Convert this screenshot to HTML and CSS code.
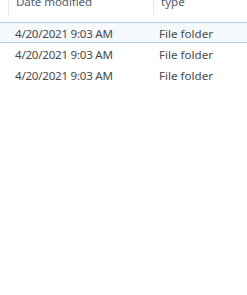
FILE: index.html
```html
<!DOCTYPE html>
<html>
<head>
<meta charset="utf-8">
<link rel="stylesheet" href="styles.css">
</head>
<body>
<div class="view">
  <div class="header">
    <div class="hcell date">Date modified</div>
    <div class="hcell type">Type</div>
  </div>
  <div class="rows">
    <div class="row selected">
      <div class="cell date">4/20/2021 9:03 AM</div>
      <div class="cell type">File folder</div>
    </div>
    <div class="row">
      <div class="cell date">4/20/2021 9:03 AM</div>
      <div class="cell type">File folder</div>
    </div>
    <div class="row">
      <div class="cell date">4/20/2021 9:03 AM</div>
      <div class="cell type">File folder</div>
    </div>
  </div>
</div>
</body>
</html>
```
FILE: styles.css
```css
html, body {
  margin: 0;
  padding: 0;
  background: #ffffff;
}
body {
  font-family: "Noto Sans", "Open Sans", sans-serif;
  font-size: 11.6px;
  color: #4a4a4a;
  width: 247px;
  height: 295px;
  overflow: hidden;
}
.view {
  display: flex;
  flex-direction: column;
}
.header {
  display: flex;
  height: 15px;
  margin-top: -5px;
  padding-top: 5px;
  margin-bottom: 2px;
  align-items: flex-end;
}
.hcell {
  height: 20px;
  box-sizing: border-box;
  line-height: 13px;
  color: #55606c;
  border-left: 1px solid #e6e6e6;
  padding-left: 7px;
}
.hcell.date {
  margin-left: 8px;
  width: 145px;
  letter-spacing: -0.1px;
}
.hcell.type {
  flex: 1;
  text-transform: lowercase;
}
.rows {
  display: flex;
  flex-direction: column;
  margin-top: 5px;
}
.row {
  display: flex;
  height: 21px;
  box-sizing: border-box;
  align-items: center;
  padding-top: 1px;
  border-top: 1px solid transparent;
  border-bottom: 1px solid transparent;
}
.row.selected {
  border-color: #a9d1e6;
  background: #f6fafd;
}
.cell {
  white-space: nowrap;
}
.cell.date {
  padding-left: 15px;
  width: 144px;
  letter-spacing: -0.25px;
}
.cell.type {
  flex: 1;
}
```
